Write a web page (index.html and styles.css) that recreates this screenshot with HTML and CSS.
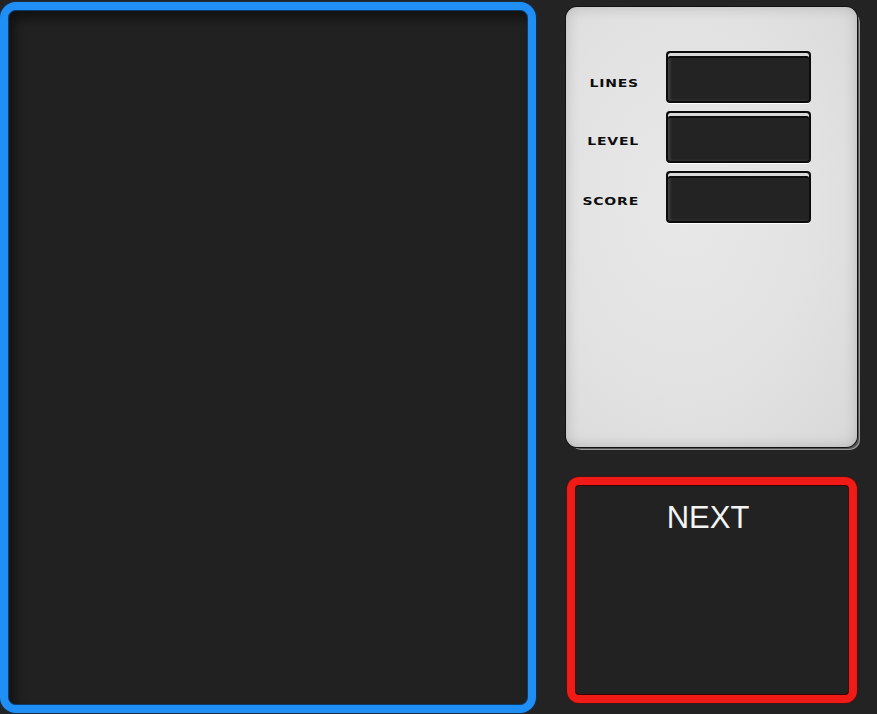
FILE: index.html
```html
<!DOCTYPE html>
<html>
<head>
<meta charset="utf-8">
<link rel="stylesheet" href="styles.css">
</head>
<body>
<div class="app">
  <div class="board"></div>
  <div class="side">
    <div class="stats">
      <div class="row row-first"><span class="label">LINES</span><div class="lcd"></div></div>
      <div class="row"><span class="label">LEVEL</span><div class="lcd"></div></div>
      <div class="row"><span class="label">SCORE</span><div class="lcd"></div></div>
    </div>
    <div class="next">
      <div class="next-title">NEXT</div>
    </div>
  </div>
</div>
</body>
</html>
```

FILE: styles.css
```css
html, body {
  margin: 0;
  padding: 0;
  background: #232323;
  width: 877px;
  height: 714px;
  overflow: hidden;
}
.app {
  display: flex;
  padding: 2px 0 0 0;
  gap: 30px;
}
.board {
  width: 536px;
  height: 711px;
  box-sizing: border-box;
  border: 8px solid #1f8ff5;
  border-radius: 16px;
  background: #212121;
  box-shadow: inset 0 0 0 1px #0a3a70, inset 6px 8px 12px rgba(0,0,0,0.5), 0 0 2px #0b4a90;
}
.side {
  display: flex;
  flex-direction: column;
  width: 291px;
  padding-top: 5px;
}
.stats {
  height: 440px;
  box-sizing: border-box;
  border-radius: 11px;
  background: radial-gradient(ellipse at 40% 45%, #e8e8e8 0%, #e2e2e2 55%, #d8d8d8 100%);
  box-shadow: inset 0 0 14px rgba(0,0,0,0.18), 0 0 0 1px #111, 3px 3px 0 -1px #555, 4px 4px 0 -1px #999;
  padding: 44px 46px 0 0;
  display: flex;
  flex-direction: column;
  gap: 8px;
}
.row {
  display: flex;
  align-items: center;
  justify-content: flex-end;
  gap: 28px;
}
.label {
  font-family: "DejaVu Sans", sans-serif;
  font-weight: bold;
  font-size: 14px;
  letter-spacing: 0.8px;
  margin-right: -1px;
  color: #0d0d0d;
  transform: translateY(4px) scaleY(0.78);
}
.row-first .label {
  transform: translateY(6px) scaleY(0.78);
}
.lcd {
  width: 145px;
  height: 52px;
  box-sizing: border-box;
  border-radius: 4px;
  background: #232323;
  border: 2px solid #0c0c0c;
  box-shadow: inset 0 3px 0 #d8d8d8, inset 0 5px 0 #0d0d0d, inset 2px 0 3px rgba(255,255,255,0.15), 0 1px 0 #fff;
}
.next {
  margin-top: 30px;
  margin-left: 1px;
  height: 226px;
  box-sizing: border-box;
  border: 8px solid #f01a16;
  border-radius: 12px;
  background: #222;
  box-shadow: inset 0 0 0 1px #3a0000, 0 0 2px #700;
  display: flex;
  justify-content: center;
}
.next-title {
  font-family: "Liberation Sans", Arial, sans-serif;
  font-size: 31px;
  color: #f4f4f4;
  margin-top: 15px;
  margin-right: 8px;
}
```
